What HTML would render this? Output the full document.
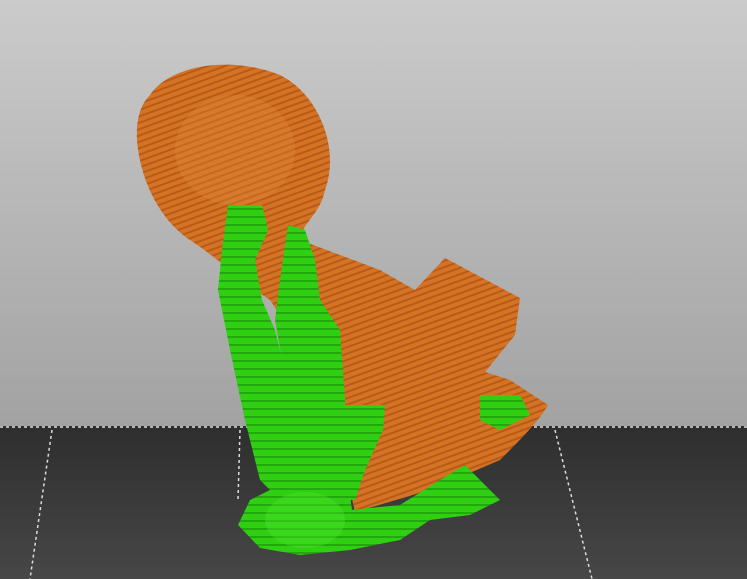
<!DOCTYPE html>
<html><head><style>
html,body{margin:0;padding:0;width:747px;height:579px;overflow:hidden;background:#333}
</style></head><body>
<svg width="747" height="579" viewBox="0 0 747 579" xmlns="http://www.w3.org/2000/svg">
<defs>
<linearGradient id="bg" x1="0" y1="0" x2="0" y2="1">
<stop offset="0" stop-color="#cbcbcb"/><stop offset="1" stop-color="#a2a2a2"/>
</linearGradient>
<linearGradient id="fl" x1="0" y1="0" x2="0" y2="1">
<stop offset="0" stop-color="#2e2e2e"/><stop offset="1" stop-color="#474747"/>
</linearGradient>
<pattern id="stripes" width="6" height="6" patternUnits="userSpaceOnUse" patternTransform="rotate(-20)">
<rect width="6" height="6" fill="#d57325"/><rect width="6" height="2" fill="#b85a18"/>
</pattern>
<pattern id="gst" width="8" height="8" patternUnits="userSpaceOnUse">
<rect width="8" height="8" fill="#2fd012"/><rect width="8" height="2" fill="#22a80c"/>
</pattern>
</defs>
<rect width="747" height="428" fill="url(#bg)"/>
<rect y="426" width="747" height="153" fill="url(#fl)"/>
<line x1="0" y1="427" x2="747" y2="427" stroke="#ddd" stroke-width="1.5" stroke-dasharray="3,3"/>
<line x1="52" y1="430" x2="30" y2="579" stroke="#ddd" stroke-width="1.5" stroke-dasharray="3,3"/>
<line x1="555" y1="430" x2="592" y2="579" stroke="#ddd" stroke-width="1.5" stroke-dasharray="3,3"/>
<line x1="240" y1="430" x2="238" y2="500" stroke="#ddd" stroke-width="1.5" stroke-dasharray="3,3"/>
<g fill="url(#stripes)">
<path d="M150 95 C170 65 230 55 280 75 C320 95 340 150 325 190 C320 215 300 225 300 240 L380 270 L415 290 L445 258 L520 298 L515 335 L485 372 L510 380 L548 405 C540 420 520 440 500 460 L430 490 L355 512 L350 490 L345 420 C320 380 290 330 270 300 C240 280 220 260 190 240 C160 220 140 180 137 140 C136 120 140 105 150 95 Z"/>
</g>
<g fill="url(#gst)">
<path d="M228 205 L262 205 L268 230 L255 260 L262 300 L275 330 L290 390 L295 470 L280 500 L260 480 L245 420 L230 350 L218 290 L222 250 Z"/>
<path d="M288 225 L305 230 L315 260 L320 300 L340 330 L345 400 L345 460 L352 510 L310 520 L290 480 L288 420 L282 360 L275 320 L280 280 Z"/>
<path d="M335 405 L385 405 L383 430 L365 470 L355 500 L340 500 Z"/>
<path d="M250 500 L290 480 L345 495 L350 510 L400 505 L440 480 L465 465 L480 480 L500 500 L470 515 L430 520 L400 540 L350 550 L300 555 L260 548 L238 525 Z"/>
<path d="M480 395 L520 395 L530 415 L500 430 L480 420 Z"/>
</g>
<ellipse cx="235" cy="150" rx="60" ry="55" fill="#e08838" opacity="0.35"/>
<ellipse cx="305" cy="520" rx="40" ry="28" fill="#4be22a" opacity="0.4"/>
</svg>
</body></html>
